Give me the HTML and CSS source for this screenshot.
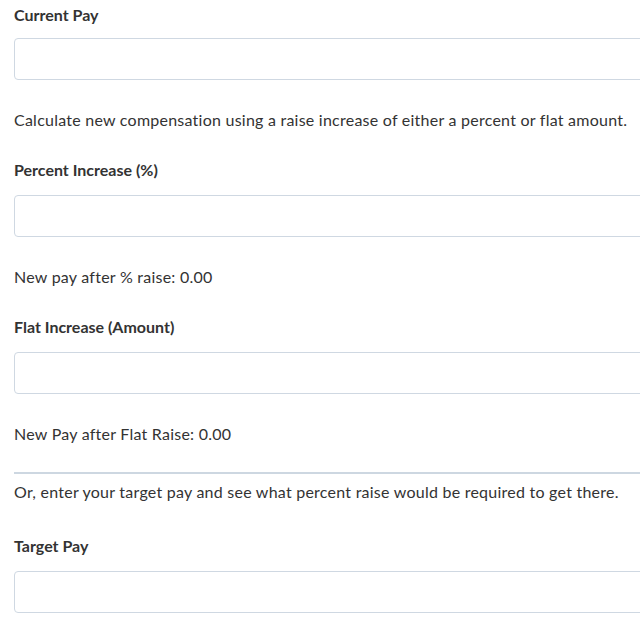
FILE: index.html
```html
<!DOCTYPE html>
<html>
<head>
    <meta charset='utf-8'>
    <title>Raise Calculator</title>
    <meta name='viewport' content='width=device-width, initial-scale=1'>
    <link rel="stylesheet" href="styles.css">
</head>
<body>
<div id="calc">
    <label class="fieldLabel firstLabel" for="currentPay">Current Pay</label>
    <input class="fieldInput" id="currentPay" type="text">

    <p class="note">Calculate new compensation using a raise increase of either a percent or flat amount.</p>

    <label class="fieldLabel" for="percentInc">Percent Increase (%)</label>
    <input class="fieldInput" id="percentInc" type="text">

    <p class="note">New pay after % raise: 0.00</p>

    <label class="fieldLabel" for="flatInc">Flat Increase (Amount)</label>
    <input class="fieldInput" id="flatInc" type="text">

    <p class="note">New Pay after Flat Raise: 0.00</p>

    <hr class="divider">

    <p class="note afterDivider">Or, enter your target pay and see what percent raise would be required to get there.</p>

    <label class="fieldLabel" for="targetPay">Target Pay</label>
    <input class="fieldInput" id="targetPay" type="text">
</div>
</body>
</html>
```

FILE: styles.css
```css
html {
    background-color: #fff;
}

body {
    margin: 0;
    padding: 4px 0 0 14px;
    overflow: hidden;
    font-family: "Lato", "Noto Sans", sans-serif;
    font-size: 16px;
    color: #333;
}

#calc {
    display: flex;
    flex-direction: column;
    width: 720px;
}

.fieldLabel {
    display: block;
    font-weight: 700;
    line-height: 22px;
    margin-bottom: 14px;
}

.firstLabel {
    margin-bottom: 12px;
}

.fieldInput {
    box-sizing: border-box;
    width: 100%;
    height: 42px;
    margin: 0;
    border: 1px solid #cfd8e2;
    border-radius: 4px;
    background-color: #fff;
}

.note {
    margin: 29px 0 28px;
    line-height: 22px;
    letter-spacing: 0.24px;
}

.divider {
    width: 100%;
    margin: -1px 0 0;
    border: 0;
    border-top: 2px solid #cdd7e1;
}

.afterDivider {
    margin-top: 7px;
    margin-bottom: 32px;
}
```
